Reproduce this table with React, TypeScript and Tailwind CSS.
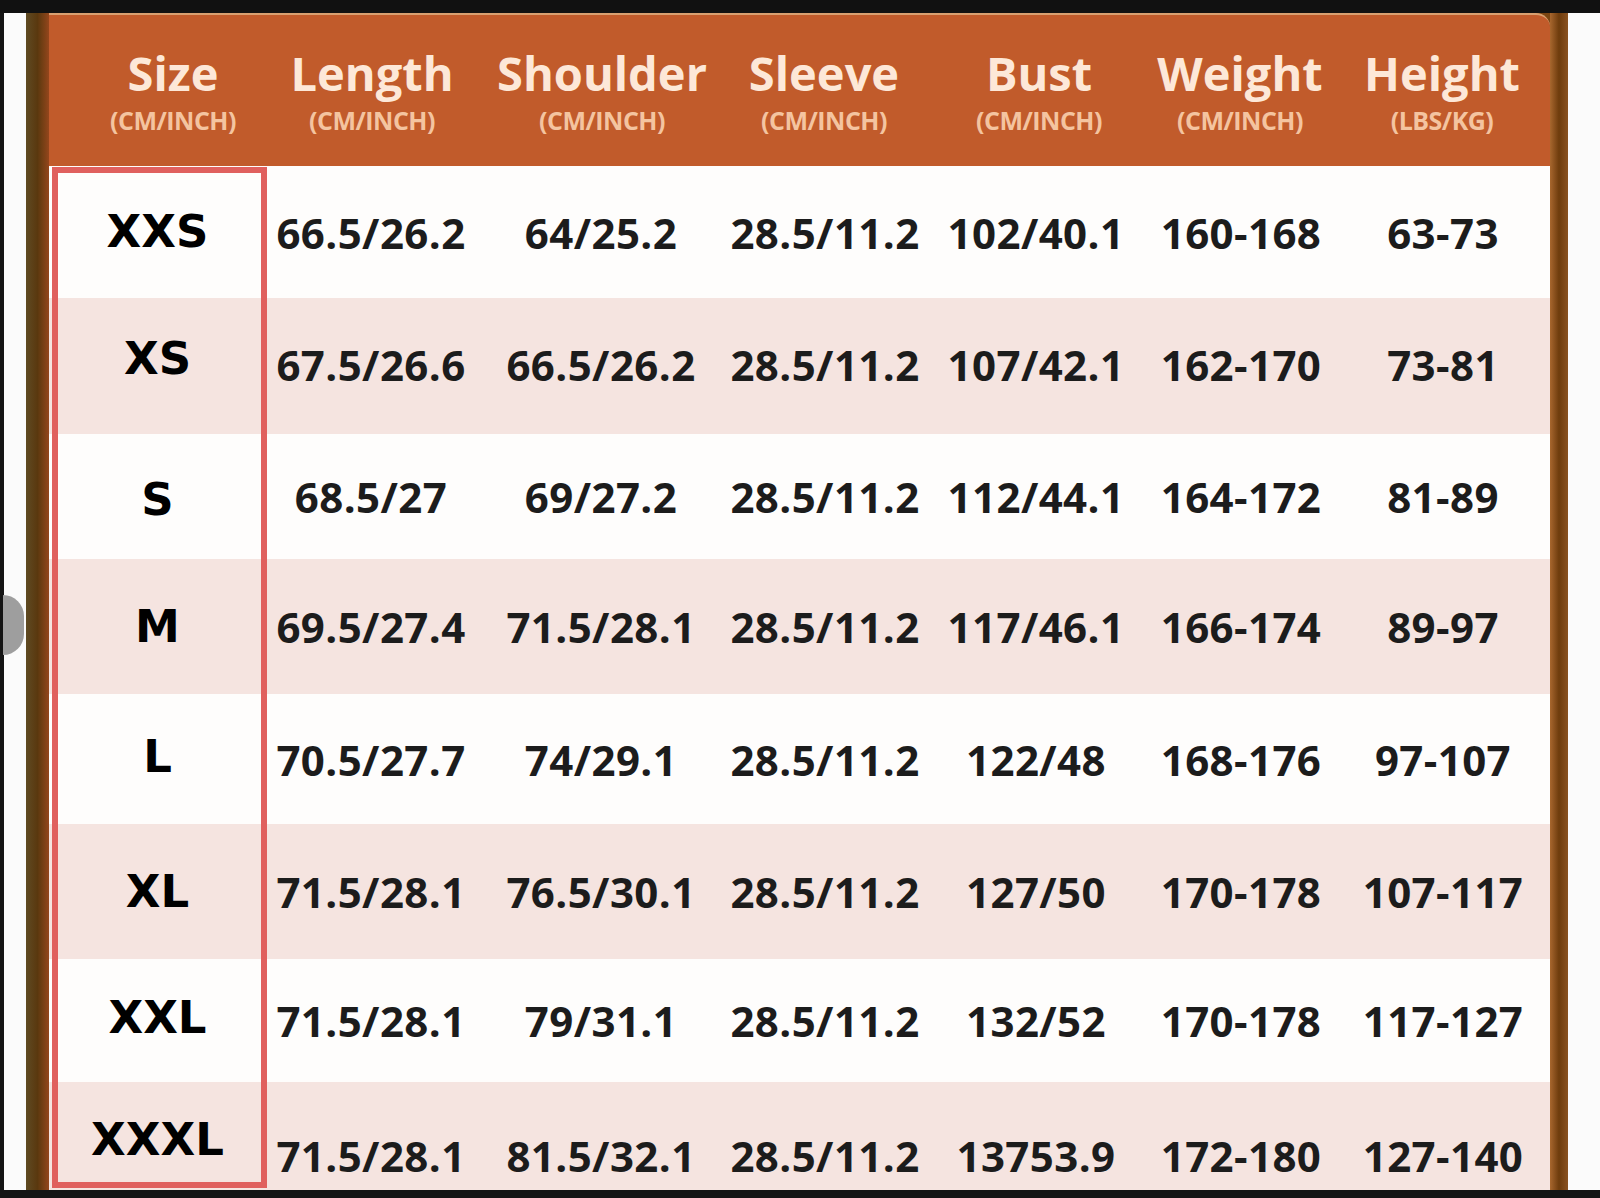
import React from "react";

type Column = { title: string; unit: string };

const columns: Column[] = [
  { title: "Size", unit: "(CM/INCH)" },
  { title: "Length", unit: "(CM/INCH)" },
  { title: "Shoulder", unit: "(CM/INCH)" },
  { title: "Sleeve", unit: "(CM/INCH)" },
  { title: "Bust", unit: "(CM/INCH)" },
  { title: "Weight", unit: "(CM/INCH)" },
  { title: "Height", unit: "(LBS/KG)" },
];

const headerWidths = ["w-[166px]", "w-[232px]", "w-[228px]", "w-[216px]", "w-[214px]", "w-[188px]", "w-[216px]"];
const bodyWidths = ["w-[215px]", "w-[214px]", "w-[246px]", "w-[202px]", "w-[220px]", "w-[190px]", "w-[214px]"];

// sizeShift / valueShift nudge the text a little, the way it sits in the original chart
const rows = [
  { size: "XXS", h: "h-[132px]", sizeShift: "", valueShift: "", values: ["66.5/26.2", "64/25.2", "28.5/11.2", "102/40.1", "160-168", "63-73"] },
  { size: "XS", h: "h-[136px]", sizeShift: "pb-[14px]", valueShift: "pb-[4px]", values: ["67.5/26.6", "66.5/26.2", "28.5/11.2", "107/42.1", "162-170", "73-81"] },
  { size: "S", h: "h-[125px]", sizeShift: "pt-[6px]", valueShift: "", values: ["68.5/27", "69/27.2", "28.5/11.2", "112/44.1", "164-172", "81-89"] },
  { size: "M", h: "h-[135px]", sizeShift: "", valueShift: "", values: ["69.5/27.4", "71.5/28.1", "28.5/11.2", "117/46.1", "166-174", "89-97"] },
  { size: "L", h: "h-[130px]", sizeShift: "pb-[4px]", valueShift: "", values: ["70.5/27.7", "74/29.1", "28.5/11.2", "122/48", "168-176", "97-107"] },
  { size: "XL", h: "h-[135px]", sizeShift: "", valueShift: "", values: ["71.5/28.1", "76.5/30.1", "28.5/11.2", "127/50", "170-178", "107-117"] },
  { size: "XXL", h: "h-[123px]", sizeShift: "pb-[6px]", valueShift: "", values: ["71.5/28.1", "79/31.1", "28.5/11.2", "132/52", "170-178", "117-127"] },
  { size: "XXXL", h: "h-[108px]", sizeShift: "pt-[8px]", valueShift: "pt-[38px]", values: ["71.5/28.1", "81.5/32.1", "28.5/11.2", "13753.9", "172-180", "127-140"] },
];

const App = () => {
  return (
    <div className="relative w-[1600px] h-[1198px] bg-black flex flex-col overflow-hidden">
      <div className="h-[13px] shrink-0 bg-[#111]" />
      <div className="flex flex-1">
        <div className="w-[4px] bg-[#141414]" />
        <div className="w-[22px] bg-[#fbfbfb]" />
        <div className="w-[23px] bg-gradient-to-r from-[#5e4a22] via-[#5a380e] to-[#94461c]" />

        {/* table */}
        <div className="flex-1 flex flex-col bg-[#7a4512]">
          <div
            className="h-[153px] shrink-0 flex pl-[41px] bg-[#c15b2b] rounded-tr-[14px] border-t-[2px] border-[#d9a070]"
            style={{ fontFamily: '"Open Sans", "Noto Sans", sans-serif' }}
          >
            {columns.map((c, i) => (
              <div key={c.title} className={`${headerWidths[i]} shrink-0 flex flex-col items-center pt-[32px]`}>
                <span className="text-[47px] leading-[52px] font-bold text-[#fde8d8] whitespace-nowrap">{c.title}</span>
                <span className="mt-[7px] text-[25px] leading-[28px] font-bold text-[#f4c4a0] tracking-[-0.02em] whitespace-nowrap">
                  {c.unit}
                </span>
              </div>
            ))}
          </div>

          <div className="relative flex-1 flex flex-col bg-white">
            {rows.map((r, idx) => (
              <div
                key={r.size}
                className={`${r.h} shrink-0 flex ${idx % 2 === 0 ? "bg-[#fefdfc]" : "bg-[#f5e4e0]"}`}
              >
                <div
                  className={`${bodyWidths[0]} shrink-0 flex items-center justify-center pl-[2px] ${r.sizeShift} text-[45px] font-bold text-black`}
                  style={{ fontFamily: '"DejaVu Sans", sans-serif' }}
                >
                  {r.size}
                </div>
                {r.values.map((v, i) => (
                  <div
                    key={i}
                    className={`${bodyWidths[i + 1]} shrink-0 flex items-center justify-center whitespace-nowrap text-[42px] tracking-[0.01em] font-bold text-[#1c1c1c] ${r.valueShift}`}
                    style={{ fontFamily: '"Open Sans", "Noto Sans", sans-serif' }}
                  >
                    {v}
                  </div>
                ))}
              </div>
            ))}
            <div className="absolute left-[3px] top-[1px] bottom-[2px] w-[215px] border-[6px] border-[#e0605e] pointer-events-none" />
          </div>
        </div>

        <div className="w-[18px] bg-gradient-to-r from-[#a8672e] via-[#6e3c0c] to-[#8a5220]" />
        <div className="w-[32px] bg-[#fbfbfb]" />
      </div>
      <div className="h-[8px] shrink-0 bg-[#141414]" />

      {/* carousel arrow peeking in from the left */}
      <div className="absolute left-[3px] top-[595px] w-[21px] h-[60px] rounded-r-full bg-[#9e9e9e]" />
    </div>
  );
};

export default App;
